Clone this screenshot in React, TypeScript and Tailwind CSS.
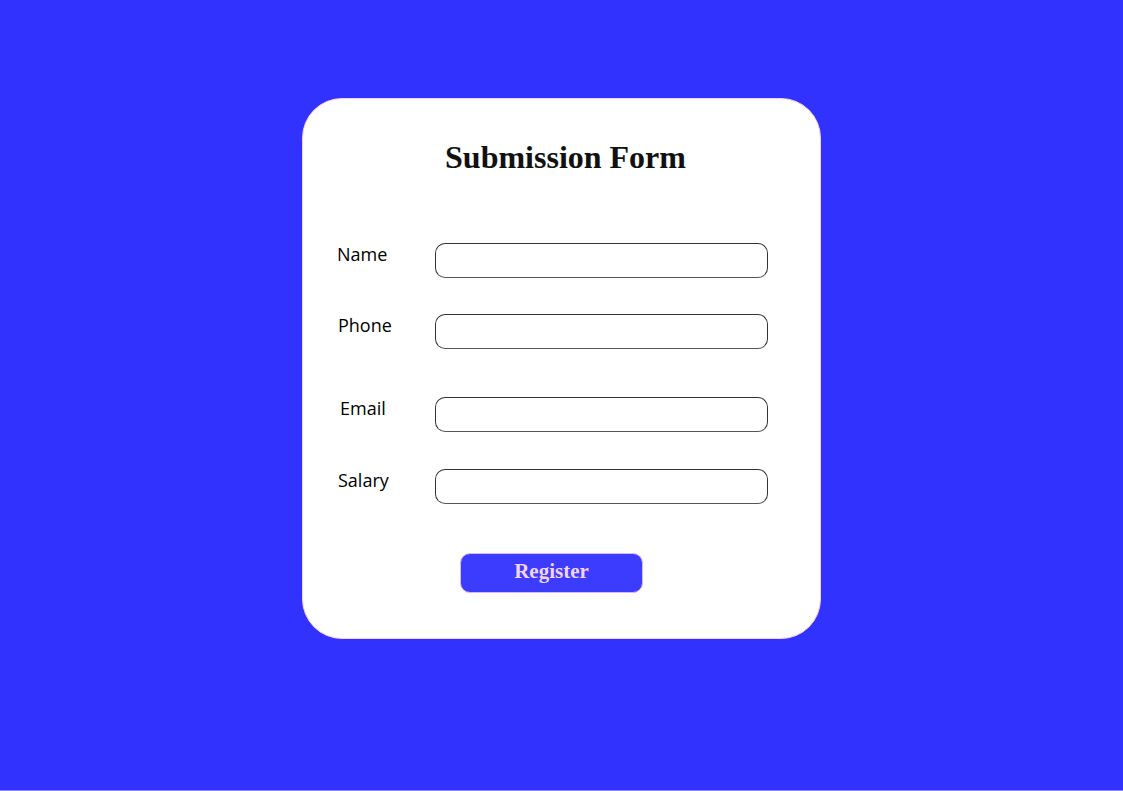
import React from "react";

const rows = [
  { label: "Name", cls: "pl-[34px]", mb: "mb-[36px]" },
  { label: "Phone", cls: "pl-[35px]", mb: "mb-[48px]" },
  { label: "Email", cls: "pl-[37px]", mb: "mb-[37px]" },
  { label: "Salary", cls: "pl-[35px]", mb: "mb-[49px]" },
];

export default function App() {
  return (
    <div className="w-full min-h-[791px] flex flex-col bg-[#3232ff]">
      <div className="h-[790px] pt-[98px]">
        <div className="mx-auto w-[519px] h-[541px] bg-white rounded-[40px] border border-[#f3cdf3] pt-[39px]">
          <h1 className="text-center text-[32px] leading-[38px] font-bold text-[#111] mb-[67px] pl-[8px]" style={{ fontFamily: '"Liberation Serif", serif' }}>
            Submission Form
          </h1>
          {rows.map((r) => (
            <div key={r.label} className={`flex items-start ${r.mb}`}>
              <div
                className={`w-[132px] text-[18px] leading-[24px] text-black -mt-[1px] ${r.cls}`}
                style={{ fontFamily: '"Open Sans", sans-serif' }}
              >
                {r.label}
              </div>
              <div className="w-[333px] h-[35px] rounded-[10px] border border-[#333] border-b-[#555] bg-white" />
            </div>
          ))}
          <button
            className="ml-[157px] w-[183px] h-[40px] rounded-[10px] bg-[#3c3cff] border border-[#d9b6f6] text-[21px] font-bold text-[#f2d3f2] flex items-center justify-center pb-[3px]"
            style={{ fontFamily: '"Liberation Serif", serif' }}
          >
            Register
          </button>
        </div>
      </div>
      <div className="h-[1px] bg-[#8686ff]" />
    </div>
  );
}
